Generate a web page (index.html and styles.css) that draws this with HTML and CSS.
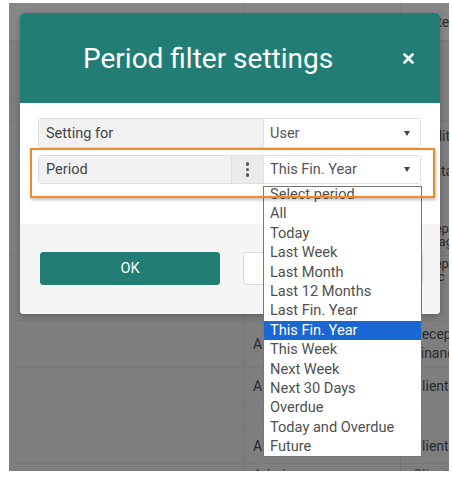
FILE: index.html
```html
<!DOCTYPE html>
<html lang="en">
<head>
<meta charset="utf-8">
<title>Period filter settings</title>
<link rel="stylesheet" href="styles.css">
</head>
<body>
<div class="screen">
  <div class="bg-table">
    <div class="bg-row bg-head r-37"><div class="c1"></div><div class="c2"></div><div class="c3">Center</div></div>
    <div class="bg-row r-58"><div class="c1"></div><div class="c2"></div><div class="c3"></div></div>
    <div class="bg-row r-22"><div class="c1"></div><div class="c2"></div><div class="c3"></div></div>
    <div class="bg-row r-30"><div class="c1"></div><div class="c2"></div><div class="c3">Credit</div></div>
    <div class="bg-row r-40"><div class="c1"></div><div class="c2"></div><div class="c3">Capital</div></div>
    <div class="bg-row r-24"><div class="c1"></div><div class="c2"></div><div class="c3"></div></div>
    <div class="bg-row r-41"><div class="c1"></div><div class="c2"></div><div class="c3 two">Recep<br>Manag</div></div>
    <div class="bg-row r-28"><div class="c1"></div><div class="c2"></div><div class="c3 two">Recep<br>Finnc</div></div>
    <div class="bg-row r-37"><div class="c1"></div><div class="c2"></div><div class="c3"></div></div>
    <div class="bg-row r-47"><div class="c1"></div><div class="c2">A</div><div class="c3 tall">Recep<br>Financ</div></div>
    <div class="bg-row r-36"><div class="c1"></div><div class="c2">A</div><div class="c3">Client.</div></div>
    <div class="bg-row r-24"><div class="c1"></div><div class="c2"></div><div class="c3"></div></div>
    <div class="bg-row r-36"><div class="c1"></div><div class="c2">A</div><div class="c3">Client.</div></div>
    <div class="bg-row r-20"><div class="c1"></div><div class="c2 low">Admin</div><div class="c3 low">Client</div></div>
  </div>

  <div class="modal">
    <div class="modal-header">
      <h1 class="modal-title">Period filter settings</h1>
      <button class="close" aria-label="Close">
        <svg width="11" height="11" viewBox="0 0 11 11"><path d="M1.5 1.5 L9.5 9.5 M9.5 1.5 L1.5 9.5" stroke="#fff" stroke-width="2.6" stroke-linecap="round"/></svg>
      </button>
    </div>
    <div class="modal-body">
      <div class="field-row row-a">
        <div class="label label-wide">Setting for</div>
        <div class="select">User<span class="caret"></span></div>
      </div>
      <div class="field-row row-b">
        <div class="label label-short">Period</div>
        <div class="kebab"><span class="dot"></span><span class="dot"></span><span class="dot"></span></div>
        <div class="select">This Fin. Year<span class="caret"></span></div>
      </div>
    </div>
    <div class="modal-footer">
      <button class="btn btn-ok">OK</button>
      <button class="btn btn-cancel">Cancel</button>
    </div>
  </div>

  <ul class="dropdown">
    <li class="opt opt-first">Select period</li>
    <li class="opt">All</li>
    <li class="opt">Today</li>
    <li class="opt">Last Week</li>
    <li class="opt">Last Month</li>
    <li class="opt">Last 12 Months</li>
    <li class="opt">Last Fin. Year</li>
    <li class="opt opt-selected">This Fin. Year</li>
    <li class="opt">This Week</li>
    <li class="opt">Next Week</li>
    <li class="opt">Next 30 Days</li>
    <li class="opt">Overdue</li>
    <li class="opt">Today and Overdue</li>
    <li class="opt">Future</li>
  </ul>

  <div class="highlight"></div>
</div>
</body>
</html>
```

FILE: styles.css
```css
* { box-sizing: border-box; }

html, body {
  margin: 0;
  padding: 0;
  background: #ffffff;
  font-family: Roboto, "Noto Sans", "Liberation Sans", sans-serif;
}

.screen {
  position: relative;
  margin: 3px 0 0 9px;
  width: 440px;
  height: 468px;
  background: #7e7e7e;
  overflow: hidden;
}

/* dimmed page behind the modal */
.bg-table {
  display: flex;
  flex-direction: column;
  font-size: 14px;
  color: #2a2a2a;
}
.bg-row {
  display: grid;
  grid-template-columns: 235px 156px 1fr;
  border-top: 1px solid rgba(0, 0, 0, 0.04);
}
.bg-head { background: #878787; border-top: none; }
.r-20 { height: 20px; }
.r-22 { height: 22px; }
.r-24 { height: 24px; }
.r-28 { height: 28px; }
.r-30 { height: 30px; }
.r-36 { height: 36px; }
.r-37 { height: 37px; }
.r-40 { height: 40px; }
.r-41 { height: 41px; }
.r-47 { height: 47px; }
.r-58 { height: 58px; }

.c1, .c2, .c3 {
  display: flex;
  align-items: center;
  white-space: nowrap;
  overflow: hidden;
  line-height: 16px;
}
.c2 { border-left: 1px solid rgba(0, 0, 0, 0.07); padding-left: 8px; }
.c3 { border-left: 1px solid rgba(0, 0, 0, 0.07); padding-left: 12px; }
.c3.two { line-height: 13px; font-size: 13px; }
.c3.tall { line-height: 19px; }
.low { align-items: flex-end; color: #3a3a3a; }

/* modal */
.modal {
  position: absolute;
  left: 11px;
  top: 10px;
  width: 420px;
  border-radius: 4px;
  background: #ffffff;
  box-shadow: 0 2px 6px rgba(0, 0, 0, 0.25);
}
.modal-header {
  height: 90px;
  display: flex;
  align-items: center;
  background: #227e74;
  border-radius: 4px 4px 0 0;
  padding-left: 63px;
  padding-right: 26px;
}
.modal-title {
  margin: 0;
  font-size: 28px;
  font-weight: 400;
  color: #ffffff;
  line-height: 1;
  padding-top: 1px;
}
.close {
  margin-left: auto;
  width: 11px;
  height: 11px;
  padding: 0;
  border: 0;
  background: transparent;
  display: flex;
}

.modal-body {
  height: 121px;
  padding: 15px 19px 0 18px;
}
.field-row {
  display: flex;
  border: 1px solid #dedede;
  border-radius: 3px;
  font-size: 14.5px;
  color: #444;
}
.row-a { height: 30px; margin-bottom: 7px; }
.row-b { height: 29px; }
.label {
  display: flex;
  align-items: center;
  padding-left: 7px;
  background: #f1f1f1;
}
.label-wide { width: 224px; }
.label-short { width: 192px; }
.kebab {
  width: 32px;
  display: flex;
  flex-direction: column;
  align-items: center;
  justify-content: center;
  gap: 2px;
  background: #ebebeb;
  border-left: 1px solid #dcdcdc;
}
.dot {
  width: 3.5px;
  height: 3.5px;
  border-radius: 50%;
  background: #555;
}
.select {
  flex: 1;
  display: flex;
  align-items: center;
  padding-left: 6px;
  padding-right: 10px;
  background: #ffffff;
  border-left: 1px solid #e2e2e2;
  color: #555;
}
.caret {
  margin-left: auto;
  width: 0;
  height: 0;
  border-left: 3.5px solid transparent;
  border-right: 3.5px solid transparent;
  border-top: 5px solid #444;
}

.modal-footer {
  height: 90px;
  background: #f5f5f5;
  border-radius: 0 0 4px 4px;
  padding: 28px 0 0 20px;
  display: flex;
  align-items: flex-start;
  gap: 23px;
}
.btn {
  width: 180px;
  height: 33px;
  border-radius: 3px;
  font-family: Roboto, "Noto Sans", sans-serif;
  font-size: 14.5px;
}
.btn-ok {
  background: #227e74;
  border: 1px solid #227e74;
  color: #ffffff;
}
.btn-cancel {
  background: #ffffff;
  border: 1px solid #dcdcdc;
  color: #444;
}

/* open select list */
.dropdown {
  position: absolute;
  left: 254px;
  top: 183px;
  width: 159px;
  margin: 0;
  padding: 0;
  list-style: none;
  background: #ffffff;
  border: 1px solid #777;
  overflow: hidden;
  font-size: 14.6px;
  color: #505050;
}
.opt {
  height: 19.4px;
  line-height: 19.4px;
  padding-left: 6px;
  white-space: nowrap;
}
.opt-first { margin-top: -2px; }
.opt-selected {
  background: #1a66d4;
  color: #ffffff;
}

/* orange annotation box */
.highlight {
  position: absolute;
  left: 21px;
  top: 145px;
  width: 405px;
  height: 50px;
  border: 2px solid #f48a25;
  box-shadow: 1px 2px 3px rgba(0, 0, 0, 0.25);
}
```
